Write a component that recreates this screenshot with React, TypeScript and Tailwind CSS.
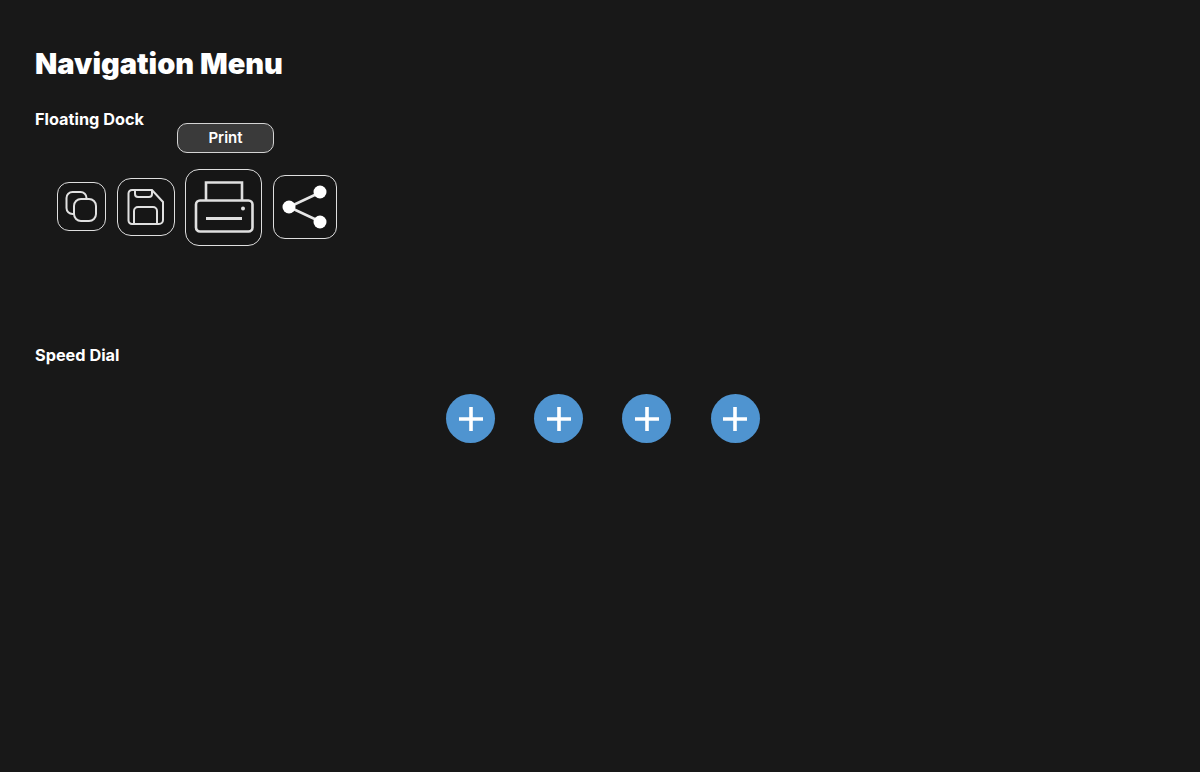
import React from 'react'

function DockItem({ size, children, tip }: { size: string; children: React.ReactNode; tip?: string }) {
  return (
    <div className={`relative flex shrink-0 items-center justify-center border border-[#dedede] bg-[#161616] ${size}`}>
      {tip && (
        <div className="absolute left-[-9px] top-[-47px] flex h-[30px] w-[97px] items-center justify-center rounded-[10px] border border-[#d4d4d4] bg-[#3a3a3a] text-[15px] font-semibold leading-none text-white">
          {tip}
        </div>
      )}
      {children}
    </div>
  )
}

function Plus() {
  return (
    <div className="flex h-[49px] w-[49px] shrink-0 items-center justify-center rounded-full bg-[#4f94d0]">
      <svg width="26" height="26" viewBox="0 0 26 26" fill="none" stroke="white" strokeWidth="3.6">
        <path d="M1 13h24M13 1v24" />
      </svg>
    </div>
  )
}

export default function App() {
  return (
    <div className="h-[772px] w-full overflow-hidden bg-[#181818] px-[35px] pt-[45.5px] text-white [font-family:Inter,sans-serif]">
      <h1 className="text-[29px] font-black leading-[36px]">Navigation Menu</h1>
      <h2 className="mt-[27.5px] text-[16.3px] font-bold leading-[20px]">Floating Dock</h2>

      <div className="ml-[22px] mt-[39px] flex h-[77px] items-center gap-[10.5px]">
        <DockItem size="h-[49px] w-[49px] rounded-[12px]">
          <svg width="33" height="33" viewBox="0 0 33 33" fill="none" stroke="#e0e0e0" strokeWidth="2">
            <path d="M9 24h-1.5a6 6 0 0 1-6-6v-10a6 6 0 0 1 6-6h8a6 6 0 0 1 6 6v1" />
            <rect x="9" y="9" width="22" height="22" rx="7" />
          </svg>
        </DockItem>
        <DockItem size="h-[58px] w-[58px] rounded-[14px]">
          <svg width="38" height="38" viewBox="0 0 38 38" fill="none" stroke="#e0e0e0" strokeWidth="2">
            <path d="M5 2h20l11 12v18a4 4 0 0 1-4 4h-27a3.5 3.5 0 0 1-3.5-3.5v-27a3.5 3.5 0 0 1 3.5-3.5z" />
            <path d="M8 2v4a3 3 0 0 0 3 3h11a3 3 0 0 0 3-3v-4" />
            <path d="M7 36v-13a4 4 0 0 1 4-4h15a4 4 0 0 1 4 4v13" />
          </svg>
        </DockItem>
        <DockItem size="mt-[1px] h-[77px] w-[77px] rounded-[14px]" tip="Print">
          <svg width="60" height="52" viewBox="0 0 60 52" fill="none" stroke="#e0e0e0" strokeWidth="2.6">
            <path d="M12 19.5V1.5h36v18" />
            <rect x="2" y="19.5" width="56.5" height="31" rx="4" />
            <path d="M12 37.5h36" strokeWidth="3" />
            <circle cx="49" cy="27.5" r="2" fill="#e0e0e0" stroke="none" />
          </svg>
        </DockItem>
        <DockItem size="h-[64px] w-[64px] rounded-[12px]">
          <svg width="46" height="46" viewBox="0 0 46 46" fill="none">
            <path d="M38 8.5 7 23l31 14.5" stroke="#e6e6e6" strokeWidth="2.6" />
            <circle cx="38" cy="8" r="6.5" fill="white" />
            <circle cx="7" cy="23" r="6.5" fill="white" />
            <circle cx="38" cy="38" r="6.5" fill="white" />
          </svg>
        </DockItem>
      </div>

      <h2 className="mt-[100px] text-[16.3px] font-bold leading-[20px]">Speed Dial</h2>

      <div className="ml-[411px] mt-[29px] flex gap-[39.2px]">
        <Plus />
        <Plus />
        <Plus />
        <Plus />
      </div>
    </div>
  )
}
